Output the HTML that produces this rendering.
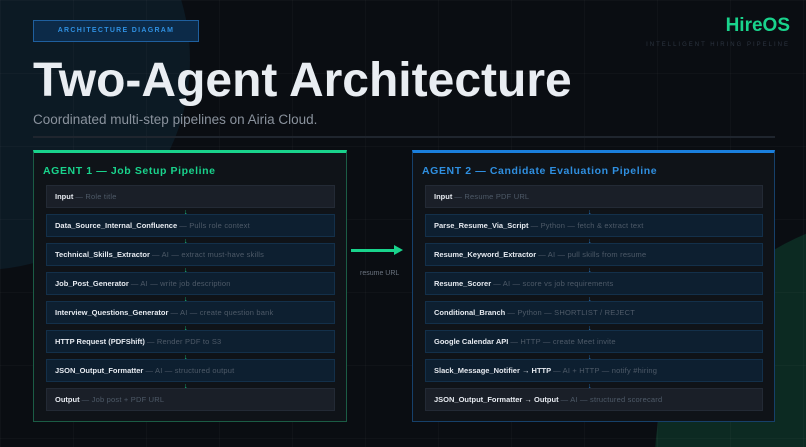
<!DOCTYPE html>
<html><head><style>
*{margin:0;padding:0;box-sizing:border-box}
html,body{width:806px;height:447px;overflow:hidden}
body{background:#0a0d12;font-family:"Liberation Sans",sans-serif}
.wrap{position:relative;width:806px;height:447px;overflow:hidden}
.grid{position:absolute;inset:0;background-image:linear-gradient(rgba(255,255,255,0.025) 1px,transparent 1px),linear-gradient(90deg,rgba(255,255,255,0.025) 1px,transparent 1px);background-size:73px 73px}
.c1{position:absolute;left:-230px;top:-150px;width:420px;height:420px;border-radius:50%;background:#0c1a24}
.c2{position:absolute;left:655px;top:215px;width:490px;height:490px;border-radius:50%;background:#0c2a22}
.tag{position:absolute;left:33px;top:20px;width:166px;height:22px;border:1px solid #1f5f9e;background:#0c2a48;color:#2f8fe0;font-size:7px;letter-spacing:1.3px;font-weight:bold;text-align:center;line-height:20px}
.logo{position:absolute;right:16px;top:15px;color:#19d38c;font-weight:bold;font-size:19px}
.sub2{position:absolute;right:16px;top:42px;color:#2c3440;font-size:6px;letter-spacing:2px}
h1{position:absolute;left:33px;top:53px;color:#e9edf2;font-size:48px;font-weight:bold;letter-spacing:0}
.desc{position:absolute;left:33px;top:112px;color:#8a929d;font-size:13.5px}
.hr{position:absolute;left:33px;top:136px;width:742px;height:2px;background:#1f252e}
.panel{position:absolute;top:150px;height:272px;background:#0f1318;border:1px solid}
.p1{left:33px;width:314px;border-color:#1b5c45;border-top:3px solid #19d38c}
.p2{left:412px;width:363px;border-color:#16406a;border-top:3px solid #1a7fdd}
.ph{position:absolute;left:9px;top:12px;font-size:10.5px;font-weight:bold;letter-spacing:0.6px}
.p1 .ph{color:#19d38c}.p2 .ph{color:#2f8fe0}
.row{position:absolute;left:12px;height:23px;background:#0d1f30;border:1px solid #13304a;font-size:7.5px;line-height:21px;padding-left:8px;color:#e6eaf0;font-weight:bold;white-space:nowrap}
.p1 .row{width:289px}.p2 .row{width:338px}
.row.g{background:#1a1f28;border-color:#232a35}
.row span{color:#4e5a68;font-weight:normal;letter-spacing:0.2px}
.ar{position:absolute;font-size:7px;line-height:6px}
.p1 .ar{left:150px;color:#19d38c}.p2 .ar{left:175px;color:#2a7fd0}
.arrow{position:absolute;left:351px;top:249px;width:44px;height:3px;background:#19d38c}
.arrow:after{content:"";position:absolute;right:-8px;top:-4px;border-left:9px solid #19d38c;border-top:5.5px solid transparent;border-bottom:5.5px solid transparent}
.rl{position:absolute;left:360px;top:270px;color:#6c7480;font-size:7px}
</style></head><body><div class="wrap">
<div class="c1"></div><div class="c2"></div><div class="grid"></div>
<div class="tag">ARCHITECTURE DIAGRAM</div>
<div class="logo">HireOS</div>
<div class="sub2">INTELLIGENT HIRING PIPELINE</div>
<h1>Two-Agent Architecture</h1>
<div class="desc">Coordinated multi-step pipelines on Airia Cloud.</div>
<div class="hr"></div>

<div class="panel p1">
<div class="ph">AGENT 1 — Job Setup Pipeline</div>
<div class="row g" style="top:32px">Input <span>— Role title</span></div>
<div class="ar" style="top:57px">↓</div>
<div class="row" style="top:61px">Data_Source_Internal_Confluence <span>— Pulls role context</span></div>
<div class="ar" style="top:86px">↓</div>
<div class="row" style="top:90px">Technical_Skills_Extractor <span>— AI — extract must-have skills</span></div>
<div class="ar" style="top:115px">↓</div>
<div class="row" style="top:119px">Job_Post_Generator <span>— AI — write job description</span></div>
<div class="ar" style="top:144px">↓</div>
<div class="row" style="top:148px">Interview_Questions_Generator <span>— AI — create question bank</span></div>
<div class="ar" style="top:173px">↓</div>
<div class="row" style="top:177px">HTTP Request (PDFShift) <span>— Render PDF to S3</span></div>
<div class="ar" style="top:202px">↓</div>
<div class="row" style="top:206px">JSON_Output_Formatter <span>— AI — structured output</span></div>
<div class="ar" style="top:231px">↓</div>
<div class="row g" style="top:235px">Output <span>— Job post + PDF URL</span></div>
</div>

<div class="arrow"></div>
<div class="rl">resume URL</div>

<div class="panel p2">
<div class="ph">AGENT 2 — Candidate Evaluation Pipeline</div>
<div class="row g" style="top:32px">Input <span>— Resume PDF URL</span></div>
<div class="ar" style="top:57px">↓</div>
<div class="row" style="top:61px">Parse_Resume_Via_Script <span>— Python — fetch &amp; extract text</span></div>
<div class="ar" style="top:86px">↓</div>
<div class="row" style="top:90px">Resume_Keyword_Extractor <span>— AI — pull skills from resume</span></div>
<div class="ar" style="top:115px">↓</div>
<div class="row" style="top:119px">Resume_Scorer <span>— AI — score vs job requirements</span></div>
<div class="ar" style="top:144px">↓</div>
<div class="row" style="top:148px">Conditional_Branch <span>— Python — SHORTLIST / REJECT</span></div>
<div class="ar" style="top:173px">↓</div>
<div class="row" style="top:177px">Google Calendar API <span>— HTTP — create Meet invite</span></div>
<div class="ar" style="top:202px">↓</div>
<div class="row" style="top:206px">Slack_Message_Notifier → HTTP <span>— AI + HTTP — notify #hiring</span></div>
<div class="ar" style="top:231px">↓</div>
<div class="row g" style="top:235px">JSON_Output_Formatter → Output <span>— AI — structured scorecard</span></div>
</div>
</div></body></html>
